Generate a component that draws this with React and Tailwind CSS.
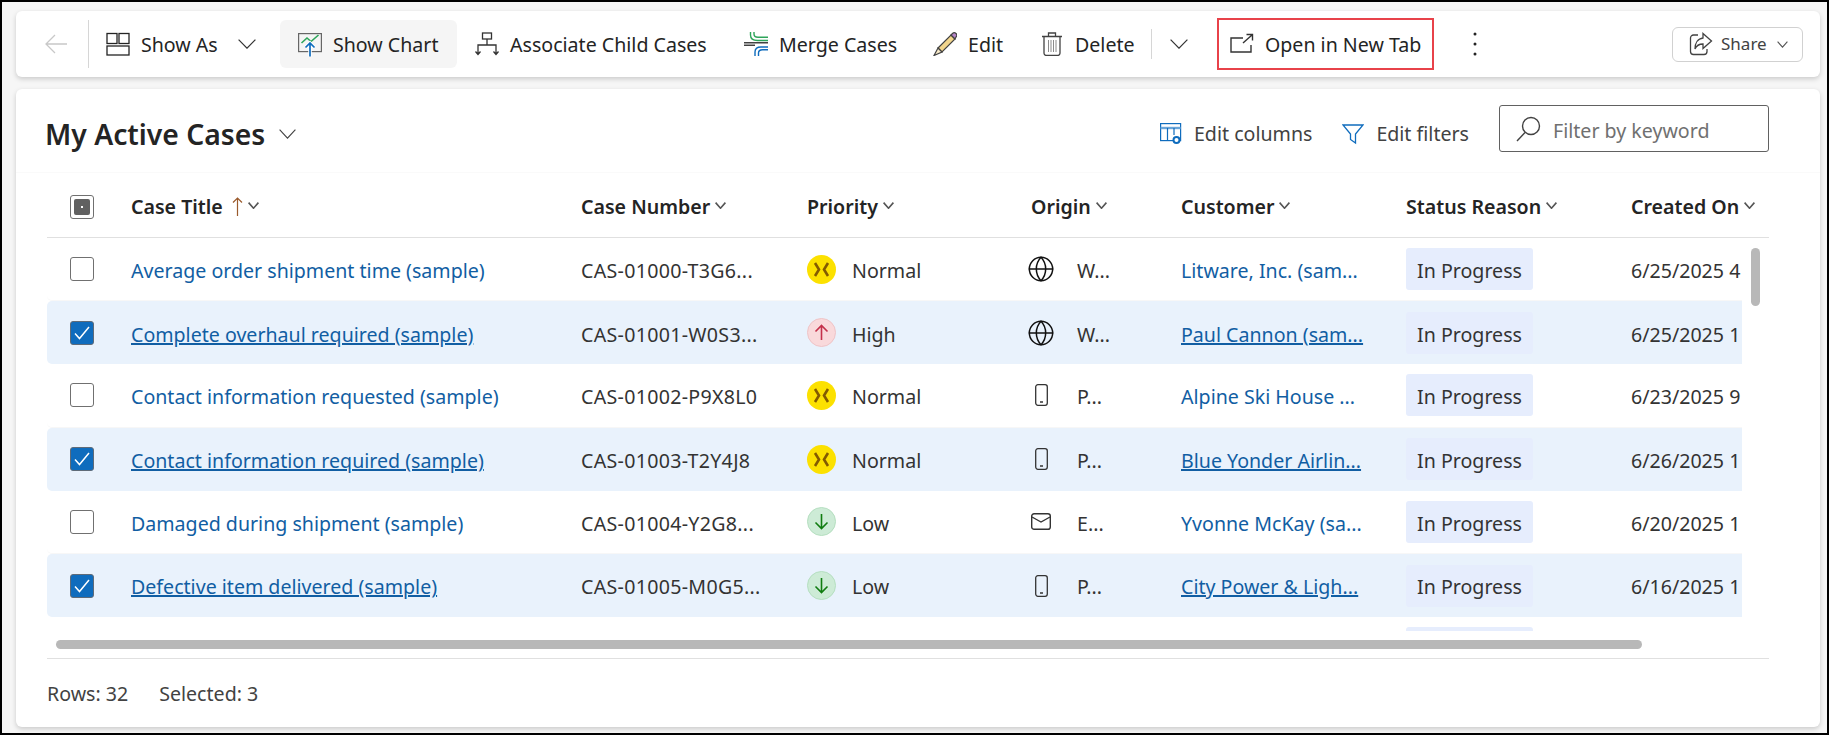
import React from "react";
import { Globe } from "lucide-react";

const ROWS = [
  { title: "Average order shipment time (sample)", number: "CAS-01000-T3G6...", priority: "Normal", origin: "W...", originIcon: "web", customer: "Litware, Inc. (sam...", date: "6/25/2025 4" },
  { title: "Complete overhaul required (sample)", number: "CAS-01001-W0S3...", priority: "High", origin: "W...", originIcon: "web", customer: "Paul Cannon (sam...", date: "6/25/2025 1", selected: true },
  { title: "Contact information requested (sample)", number: "CAS-01002-P9X8L0", priority: "Normal", origin: "P...", originIcon: "phone", customer: "Alpine Ski House ...", date: "6/23/2025 9" },
  { title: "Contact information required (sample)", number: "CAS-01003-T2Y4J8", priority: "Normal", origin: "P...", originIcon: "phone", customer: "Blue Yonder Airlin...", date: "6/26/2025 1", selected: true },
  { title: "Damaged during shipment (sample)", number: "CAS-01004-Y2G8...", priority: "Low", origin: "E...", originIcon: "mail", customer: "Yvonne McKay (sa...", date: "6/20/2025 1" },
  { title: "Defective item delivered (sample)", number: "CAS-01005-M0G5...", priority: "Low", origin: "P...", originIcon: "phone", customer: "City Power & Ligh...", date: "6/16/2025 1", selected: true },
];

const Chev = ({ w = 11, h = 7, stroke = "#424242", sw = 1.3, className }) => (
  <svg width={w} height={h} viewBox={`0 0 ${w} ${h}`} fill="none" stroke={stroke} strokeWidth={sw} className={`shrink-0 ${className || ""}`}>
    <path d={`M0.6 0.6L${w / 2} ${h - 0.8}L${w - 0.6} 0.6`} />
  </svg>
);

const ShowAsIcon = () => (
  <svg width="24" height="24" viewBox="0 0 24 24" fill="none" stroke="#242424" strokeWidth="1.3">
    <rect x="1" y="1.5" width="10" height="10" />
    <rect x="13" y="1.5" width="10" height="10" />
    <rect x="1" y="14" width="22" height="9" />
  </svg>
);

const ChartIcon = () => (
  <svg width="24" height="26" viewBox="0 0 24 26" fill="none">
    <rect x="0.6" y="2.6" width="22.8" height="18" stroke="#666" strokeWidth="1.2" />
    <path d="M3.5 12l5.5-5 4 3.5 7.5-6.5" stroke="#2ea55a" strokeWidth="1.6" />
    <path d="M12 25.5v-13M7.5 16.5l4.5-4.5 4.5 4.5" stroke="#fff" strokeWidth="3.5" />
    <path d="M12 25.5v-13M7.5 16.5l4.5-4.5 4.5 4.5" stroke="#0f6cbd" strokeWidth="1.7" />
  </svg>
);

const AssociateIcon = () => (
  <svg width="24" height="24" viewBox="0 0 24 24" fill="none" stroke="#333" strokeWidth="1.3">
    <rect x="7.5" y="1" width="9" height="6" />
    <path d="M12 7v6M3 22v-9h18v9M0.5 19.5L3 22.5l2.5-3M18.5 19.5l2.5 3 2.5-3" />
  </svg>
);

const MergeIcon = () => (
  <svg width="24" height="24" viewBox="0 0 24 24" fill="none" strokeWidth="1.4">
    <path d="M6.5 0v3c0 4 3 5.5 7 5.5H24M10 0v2c0 2 1.5 3.2 4 3.2H24" stroke="#2ea55a" />
    <path d="M0 10.8h24M0 13.2h11" stroke="#424242" />
    <path d="M11 24v-4c0-3 2-5 6-5h7M14.5 24v-3c0-2 1-3.2 4-3.2H24" stroke="#0f6cbd" />
  </svg>
);

const PencilIcon = () => (
  <svg width="24" height="24" viewBox="0 0 24 24" fill="none">
    <path d="M5 16L18 3l4 4L9 20z" fill="#f2d58c" stroke="#424242" strokeWidth="1.2" />
    <path d="M18 3l1.5-1.5a2.5 2.5 0 0 1 3.5 0 2.5 2.5 0 0 1 0 3.5L22 7z" fill="#b685c9" stroke="#424242" strokeWidth="1.2" />
    <path d="M5 16l-4 7.5L9 20z" fill="#f7e9c8" stroke="#424242" strokeWidth="1.2" />
  </svg>
);

const TrashIcon = () => (
  <svg width="24" height="24" viewBox="0 0 24 24" fill="none" stroke="#424242" strokeWidth="1.3">
    <path d="M2 4.5h20M8.5 4.5V1h7v3.5" />
    <path d="M4 4.5V21a2.5 2.5 0 0 0 2.5 2.5h11A2.5 2.5 0 0 0 20 21V4.5" />
    <path d="M8.5 8v12M11 8v12M13.5 8v12M16 8v12" stroke="#8a8a8a" strokeWidth="1" />
  </svg>
);

const NewTabIcon = () => (
  <svg width="24" height="24" viewBox="0 0 24 24" fill="none" stroke="#333" strokeWidth="1.4">
    <path d="M13 6H1v14h20v-7" />
    <path d="M13 11l9-8M16.5 2.5h6v6" />
  </svg>
);

const ShareIcon = () => (
  <svg width="24" height="24" viewBox="0 0 24 24" fill="none" stroke="#424242" strokeWidth="1.3">
    <path d="M9 3H4.5A3 3 0 0 0 1.5 6v13.5a3 3 0 0 0 3 3H15a3 3 0 0 0 3-3V17" />
    <path d="M14 1.5l8.5 7.5L14 16.5V12c-4 0-6.5 1.5-8 5 0-6 3-10.5 8-11z" />
  </svg>
);

const ColumnsIcon = () => (
  <svg width="22" height="22" viewBox="0 0 22 22" fill="none" stroke="#0f6cbd" strokeWidth="1.2">
    <rect x="0.6" y="0.6" width="20" height="17" fill="#fff" />
    <path d="M0.6 5h20" strokeWidth="2.4" stroke="#6aa5d8" />
    <path d="M7.5 5v12.5M14 5v7" />
    <circle cx="16.5" cy="17" r="3" fill="#fff" strokeWidth="2" />
  </svg>
);

const FunnelIcon = () => (
  <svg width="22" height="22" viewBox="0 0 22 22" fill="none" stroke="#0f6cbd" strokeWidth="1.3">
    <path d="M1 2h20l-7.5 9v9l-5-3.5V11z" />
  </svg>
);

const SearchIcon = () => (
  <svg width="25" height="26" viewBox="0 0 25 26" fill="none" stroke="#424242" strokeWidth="1.4">
    <circle cx="15" cy="10" r="8.5" />
    <path d="M9 16.5L1 25" />
  </svg>
);

const KebabIcon = () => (
  <svg width="6" height="24" viewBox="0 0 6 24" fill="#242424">
    <circle cx="3" cy="2" r="1.5" />
    <circle cx="3" cy="12" r="1.5" />
    <circle cx="3" cy="22" r="1.5" />
  </svg>
);

const PhoneIcon = () => (
  <svg width="13" height="22" viewBox="0 0 13 22" fill="none" stroke="#333" strokeWidth="1.3">
    <rect x="0.7" y="0.7" width="11.6" height="20.6" rx="2.2" />
    <path d="M5 18h3" strokeWidth="1.5" />
  </svg>
);

const MailIcon = () => (
  <svg width="20" height="17" viewBox="0 0 20 17" fill="none" stroke="#333" strokeWidth="1.4">
    <rect x="0.7" y="0.7" width="18.6" height="15.6" rx="2.4" />
    <path d="M1 4l9 5 9-5" />
  </svg>
);

const PriorityIcon = ({ level }) => {
  if (level === "Normal") {
    return (
      <span className="flex h-[29px] w-[29px] shrink-0 items-center justify-center rounded-full bg-[#fce100]">
        <svg width="17" height="15" viewBox="0 0 17 15" fill="none" stroke="#835b00" strokeWidth="2.6">
          <path d="M2 1L6 7.5 2 14M15 1L11 7.5 15 14" />
        </svg>
      </span>
    );
  }
  const high = level === "High";
  return (
    <span className={`flex h-[29px] w-[29px] shrink-0 items-center justify-center rounded-full border ${high ? "border-[#eec4c7] bg-[#f9d9db]" : "border-[#b5dfc0] bg-[#cdebd6]"}`}>
      <svg width="15" height="17" viewBox="0 0 15 17" fill="none" stroke={high ? "#c4314b" : "#107c10"} strokeWidth="1.6">
        {high ? <path d="M7.5 16V1.5M1.5 7.5l6-6 6 6" /> : <path d="M7.5 1v14.5M1.5 9.5l6 6 6-6" />}
      </svg>
    </span>
  );
};

const OriginIcon = ({ kind }) => {
  if (kind === "web") return <Globe size={28} strokeWidth={1.3} color="#111" className="-ml-[4px]" />;
  if (kind === "phone") return <span className="ml-[4px] flex"><PhoneIcon /></span>;
  return <span className="flex"><MailIcon /></span>;
};

const ToolButton = ({ icon, label, className }) => (
  <div className={`flex h-full shrink-0 items-center gap-[11px] ${className || ""}`}>
    <span className="flex w-[24px] shrink-0 justify-center">{icon}</span>
    <span className="whitespace-nowrap pt-[2px]">{label}</span>
  </div>
);

const HeaderCell = ({ label, className, children }) => (
  <div className={`flex shrink-0 items-center ${className}`}>
    <span className="whitespace-nowrap">{label}</span>
    {children}
    <Chev stroke="#555" sw={1.6} className="ml-[5px] -translate-y-[1px]" />
  </div>
);

const Row = ({ row }) => (
  <div className={`flex h-[63.2px] w-[1695px] shrink-0 items-center overflow-hidden rounded-l-[5px] text-[#333] ${row.selected ? "bg-[#e9f2fc]" : "border-b border-[#f7f7f7] bg-white"}`}>
    <div className="flex w-[84px] shrink-0 pl-[23px]">
      {row.selected ? (
        <span className="flex h-[24px] w-[24px] items-center justify-center rounded-[3px] border border-[#5f6b78] bg-[#0f6cbd]">
          <svg width="16" height="14" viewBox="0 0 16 14" fill="none" stroke="#fff" strokeWidth="1.5">
            <path d="M1 7.5L5.5 12.5 15 1" />
          </svg>
        </span>
      ) : (
        <span className="h-[24px] w-[24px] rounded-[3px] border border-[#707070] bg-white" />
      )}
    </div>
    <div className={`w-[450px] shrink-0 whitespace-nowrap pt-[3px] text-[#115ea3] ${row.selected ? "underline decoration-[1.5px]" : ""}`}>{row.title}</div>
    <div className="w-[226px] shrink-0 whitespace-nowrap pt-[3px] tracking-[0.3px]">{row.number}</div>
    <div className="flex w-[224px] shrink-0 items-center gap-[16px]">
      <PriorityIcon level={row.priority} />
      <span className="pt-[3px]">{row.priority}</span>
    </div>
    <div className="flex w-[150px] shrink-0 items-center">
      <span className="flex w-[46px] shrink-0">
        <OriginIcon kind={row.originIcon} />
      </span>
      <span className="pt-[3px]">{row.origin}</span>
    </div>
    <div className={`w-[225px] shrink-0 whitespace-nowrap pt-[3px] text-[#115ea3] ${row.selected ? "underline decoration-[1.5px]" : ""}`}>{row.customer}</div>
    <div className="w-[225px] shrink-0">
      <span className="flex h-[42px] w-[127px] items-center justify-center whitespace-nowrap rounded-[3px] bg-[#e6edfd] pt-[3px]">In Progress</span>
    </div>
    <div className="w-[111px] shrink-0 overflow-hidden whitespace-nowrap pt-[3px]">{row.date}</div>
  </div>
);

export default function App() {
  return (
    <div className="box-border flex h-[735px] w-full flex-col gap-[12px] border-2 border-black bg-[#f6f6f6] pb-[6px] pl-[14px] pr-[7px] pt-[9px] text-[19.6px] text-[#242424] [font-family:'Noto_Sans',sans-serif]">
      {/* command bar */}
      <div className="flex h-[66px] shrink-0 items-center rounded-[6px] bg-white pr-[16px] shadow-[0_2px_5px_rgba(0,0,0,0.18)]">
        <div className="flex w-[72px] shrink-0 pl-[29px]">
          <svg width="22" height="20" viewBox="0 0 22 20" fill="none" stroke="#c8c8c8" strokeWidth="1.3">
            <path d="M22 10H1M10 1l-9 9 9 9" />
          </svg>
        </div>
        <div className="h-[48px] w-px shrink-0 bg-[#d6d6d6]" />
        <div className="flex h-full w-[191px] shrink-0 items-center pl-[17px]">
          <ToolButton icon={<ShowAsIcon />} label="Show As" />
          <Chev w={18} h={10} stroke="#333" sw={1.2} className="ml-[20px]" />
        </div>
        <div className="h-[48px] w-[177px] shrink-0 rounded-[6px] bg-[#f5f5f5] pl-[18px]">
          <ToolButton icon={<ChartIcon />} label="Show Chart" />
        </div>
        <ToolButton icon={<AssociateIcon />} label="Associate Child Cases" className="w-[269px] pl-[18px]" />
        <ToolButton icon={<MergeIcon />} label="Merge Cases" className="w-[189px] pl-[18px]" />
        <ToolButton icon={<PencilIcon />} label="Edit" className="w-[107px] pl-[18px]" />
        <ToolButton icon={<TrashIcon />} label="Delete" className="w-[129px] pl-[18px]" />
        <div className="h-[30px] w-px shrink-0 bg-[#d6d6d6]" />
        <div className="flex w-[65px] shrink-0 pl-[18px]">
          <Chev w={18} h={10} stroke="#333" sw={1.2} />
        </div>
        <div className="h-[52px] w-[217px] shrink-0 border-2 border-[#e8424a] pl-[11px]">
          <ToolButton icon={<NewTabIcon />} label="Open in New Tab" />
        </div>
        <div className="flex w-[238px] shrink-0 pl-[38px]">
          <KebabIcon />
        </div>
        <div className="flex h-[35px] w-[131px] shrink-0 items-center rounded-[6px] border border-[#d1d1d1] pl-[16px] text-[17px] text-[#424242]">
          <ShareIcon />
          <span className="ml-[8px]">Share</span>
          <Chev stroke="#555" sw={1.1} className="ml-[10px]" />
        </div>
      </div>

      {/* list card */}
      <div className="relative flex min-h-0 flex-1 flex-col rounded-[6px] bg-white shadow-[0_2px_5px_rgba(0,0,0,0.18)]">
        <div className="flex h-[84px] shrink-0 items-center border-b border-[#fafafa] pl-[29px] pt-[7px]">
          <span className="text-[28.3px] font-semibold leading-none whitespace-nowrap">My Active Cases</span>
          <Chev w={17} h={10} stroke="#424242" sw={1.1} className="ml-[14px]" />
          <div className="ml-auto flex items-center pr-[51px] text-[#424242]">
            <ColumnsIcon />
            <span className="ml-[12px] mr-[30px] whitespace-nowrap">Edit columns</span>
            <FunnelIcon />
            <span className="ml-[12px] mr-[30px] whitespace-nowrap">Edit filters</span>
            <div className="-mt-[11px] flex h-[47px] w-[270px] items-center rounded-[3px] border border-[#616161] pl-[16px] text-[#707070]">
              <SearchIcon />
              <span className="ml-[12px] whitespace-nowrap pt-[4px]">Filter by keyword</span>
            </div>
          </div>
        </div>

        <div className="ml-[31px] flex h-[65px] w-[1722px] shrink-0 items-center border-b border-[#e0e0e0] pt-[3px] font-semibold">
          <div className="flex w-[84px] shrink-0 pl-[23px]">
            <span className="flex h-[24px] w-[24px] items-center justify-center rounded-[3px] border border-[#707070]">
              <span className="flex h-[16px] w-[16px] items-center justify-center rounded-[2px] bg-[#616161]">
                <span className="h-[2px] w-[2px] bg-white" />
              </span>
            </span>
          </div>
          <HeaderCell label="Case Title" className="w-[450px]">
            <svg width="11" height="19" viewBox="0 0 11 19" fill="none" stroke="#9a5a2c" strokeWidth="1.2" className="ml-[9px]">
              <path d="M5.5 19V1M1 5.5L5.5 1 10 5.5" />
            </svg>
          </HeaderCell>
          <HeaderCell label="Case Number" className="w-[226px]" />
          <HeaderCell label="Priority" className="w-[224px]" />
          <HeaderCell label="Origin" className="w-[150px]" />
          <HeaderCell label="Customer" className="w-[225px]" />
          <HeaderCell label="Status Reason" className="w-[225px]" />
          <HeaderCell label="Created On" className="w-[136px]" />
        </div>

        <div className="ml-[31px] flex h-[393px] shrink-0 flex-col overflow-hidden">
          {ROWS.map((row) => (
            <Row key={row.number} row={row} />
          ))}
          <div className="flex h-[63.2px] w-[1695px] shrink-0 items-start pl-[1359px] pt-[10px]">
            <span className="h-[42px] w-[127px] shrink-0 rounded-[3px] bg-[#e6edfd]" />
          </div>
        </div>

        {/* scrollbars sit over the list */}
        <div className="absolute left-[1735px] top-[159px] h-[58px] w-[9px] rounded-full bg-[#b8b8b8]" />
        <div className="absolute left-[40px] top-[551px] h-[9px] w-[1586px] rounded-full bg-[#b8b8b8]" />

        <div className="ml-[31px] mt-[27px] flex h-[69px] w-[1722px] shrink-0 items-center gap-[31px] border-t border-[#e0e0e0] pt-[2px] text-[#424242]">
          <span>Rows: 32</span>
          <span>Selected: 3</span>
        </div>
      </div>
    </div>
  );
}
